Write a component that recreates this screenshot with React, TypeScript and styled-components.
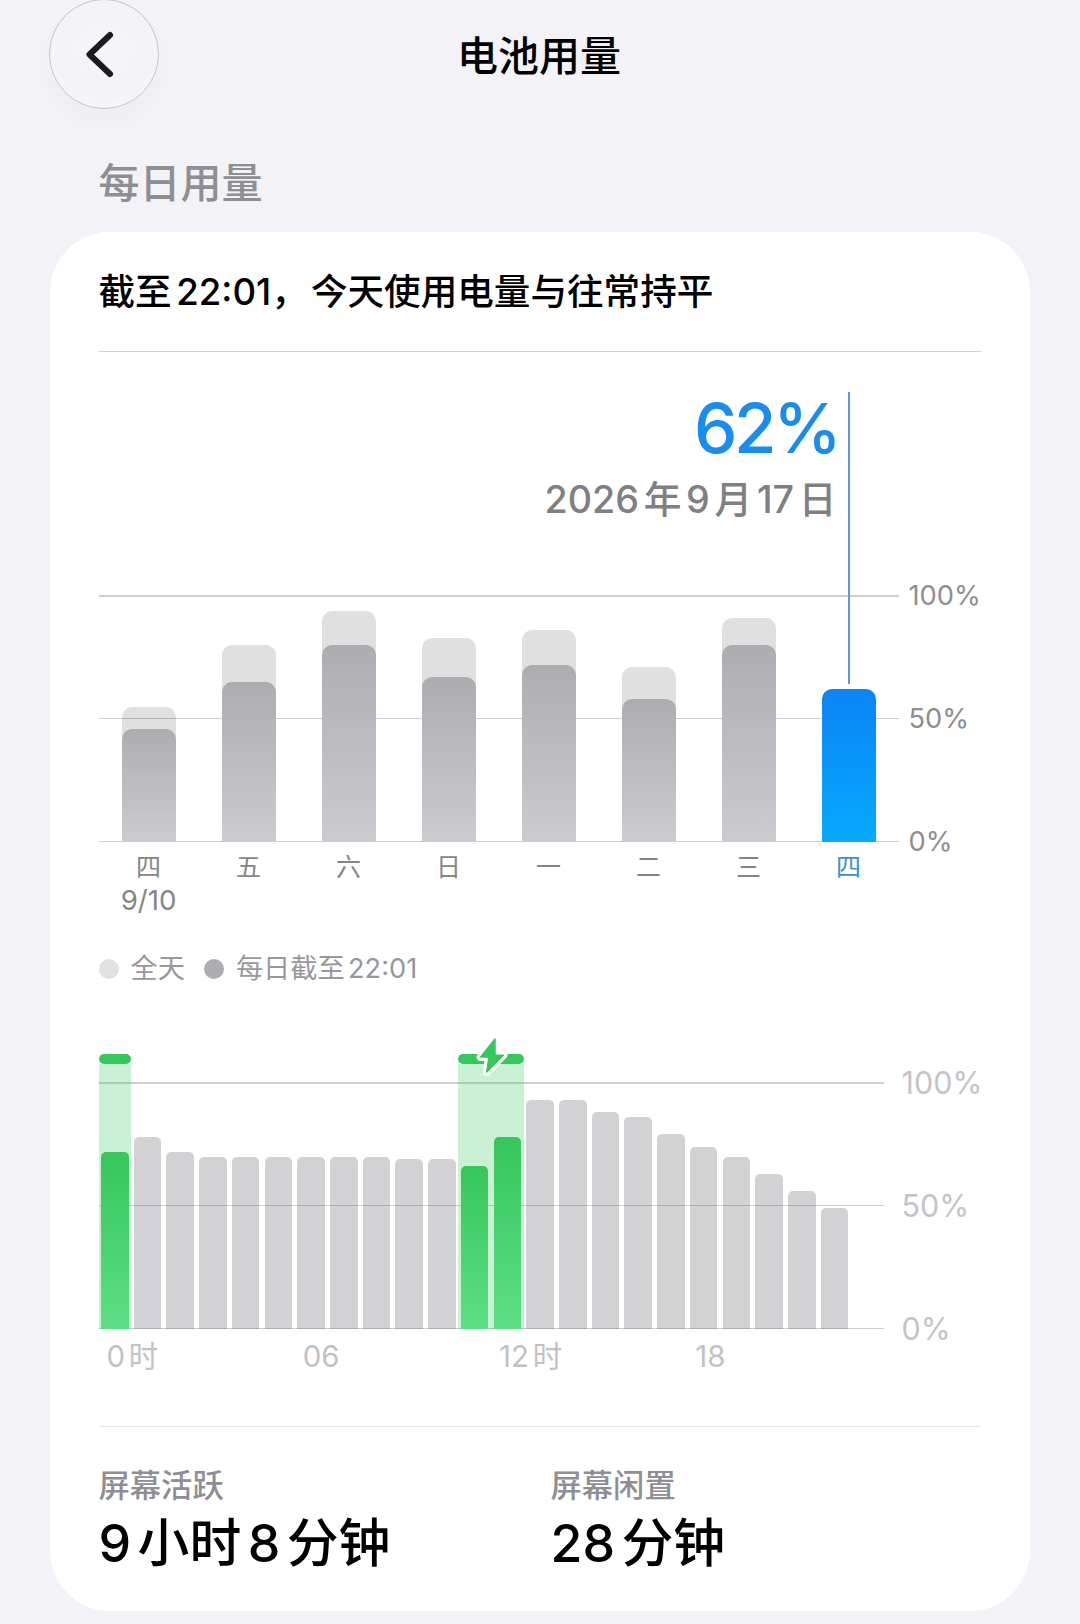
import styled, {createGlobalStyle} from "styled-components";

const DAYS = [
  {day: "四", date: "9/10", full: 135, upTo: 113},
  {day: "五", full: 196.5, upTo: 159.5},
  {day: "六", full: 230.5, upTo: 196.5},
  {day: "日", full: 203.5, upTo: 164.5},
  {day: "一", full: 211.5, upTo: 176.5},
  {day: "二", full: 174.5, upTo: 142.5},
  {day: "三", full: 223.5, upTo: 196.5},
  {day: "四", upTo: 152.5, today: true},
];

// one entry per hour, hour 23 has no data yet
const HOURS = [
  177, 191.6, 177, 172, 172, 172, 172, 172, 172, 169.6, 169.6, 162.3, 191.6, 228.3, 228.3, 216.3, 211.3, 194.3, 181.3, 172, 154.6, 137.3, 120.3,
];
const CHARGING = [0, 11, 12];

const GlobalStyle = createGlobalStyle`
  html, body {
    margin: 0;
    background: #f2f2f7;
  }
  body {
    font-family: Inter, "Noto Sans CJK SC", sans-serif;
    text-autospace: normal;
    overflow: hidden;
  }
`;

const Page = styled.div`
  width: 1080px;
  height: 1624px;
  overflow: hidden;
`;

const Header = styled.header`
  display: grid;
  grid-template-columns: 1fr auto 1fr;
  align-items: center;
  padding: 0 51px 0 49px;
  height: 108px;
`;

const BackButton = styled.button`
  display: flex;
  align-items: center;
  justify-content: center;
  width: 110px;
  height: 110px;
  margin-top: -1px;
  padding: 0 8px 0 0;
  border: 1px solid #c4c4c8;
  border-radius: 50%;
  background: radial-gradient(circle at 50% 45%, #f6f6f9 0%, #f3f3f7 60%, #fdfdfe 100%);
  box-shadow: 0 12px 24px rgba(0, 0, 0, 0.025);
`;

const Title = styled.h1`
  margin: 0;
  padding-top: 2px;
  color: #000;
  font-size: 41px;
  font-weight: 500;
  line-height: 48px;
`;

const SectionTitle = styled.h2`
  margin: 52px 0 26px 98.5px;
  color: #8e8e93;
  font-size: 41px;
  font-weight: 500;
  line-height: 46px;
`;

const Card = styled.section`
  width: 980px;
  height: 1379px;
  margin-left: 50px;
  padding: 40px 49px 0 48.5px;
  box-sizing: border-box;
  border-radius: 60px;
  background: #fff;
`;

const Summary = styled.div`
  padding-bottom: 39px;
  border-bottom: 1px solid #d1d1d6;
  color: #000;
  font-size: 36.6px;
  font-weight: 500;
  line-height: 40px;
`;

const Readout = styled.div`
  display: flex;
  flex-direction: column;
  align-items: flex-end;
  width: 800px;
  padding: 41px 63px 0 0;
  box-sizing: border-box;
`;

const Percent = styled.div`
  margin-right: -3px;
  color: #1a8cf0;
  font-size: 69px;
  font-weight: 500;
  letter-spacing: -3.3px;
  line-height: 70px;
`;

const ReadoutDate = styled.div`
  margin-top: 14px;
  margin-right: -1px;
  color: #808084;
  font-size: 37.7px;
  font-weight: 500;
  line-height: 44px;
`;

const Plot = styled.div<{$width: number; $top: number}>`
  position: relative;
  width: ${({$width}) => $width}px;
  height: 245.5px;
  margin-top: ${({$top}) => $top}px;
`;

const GridLayer = styled.div`
  position: absolute;
  inset: 0;
  display: flex;
  flex-direction: column;
  justify-content: space-between;
`;

const GridRow = styled.div`
  display: flex;
  align-items: center;
  height: 0;
`;

const GridLine = styled.div<{$width: number; $thin?: boolean}>`
  flex: none;
  width: ${({$width}) => $width}px;
  height: ${({$thin}) => ($thin ? 1 : 1.5)}px;
  background: #cfcfd2;
`;

const GridLabel = styled.span<{$faint?: boolean}>`
  margin-left: ${({$faint}) => ($faint ? 18 : 10)}px;
  color: ${({$faint}) => ($faint ? "#c4c4c6" : "#8e8e90")};
  font-size: ${({$faint}) => ($faint ? 30.5 : 27.3)}px;
  line-height: 32px;
  white-space: nowrap;
`;

const DayBars = styled.div`
  position: relative;
  display: grid;
  grid-template-columns: repeat(8, 100px);
  height: 100%;
`;

const DayColumn = styled.div`
  position: relative;
  display: flex;
  justify-content: center;
`;

const FullDayBar = styled.div<{$height: number}>`
  position: absolute;
  bottom: 0;
  width: 54px;
  height: ${({$height}) => $height}px;
  border-radius: 10px 10px 0 0;
  background: rgba(0, 0, 0, 0.12);
`;

const UpToBar = styled.div<{$height: number; $today?: boolean}>`
  position: absolute;
  bottom: 0;
  width: 54px;
  height: ${({$height}) => $height}px;
  border-radius: 10px 10px 0 0;
  background: ${({$today}) =>
    $today ? "linear-gradient(180deg, #0a84f5 0%, #06aaff 100%)" : "linear-gradient(180deg, #adadb1 0%, #cbcbd0 100%)"};
`;

const Marker = styled.div`
  position: absolute;
  bottom: calc(100% + 5px);
  left: 26px;
  width: 2px;
  height: 292px;
  background: #5b9bdc;
`;

const DayLabels = styled.div`
  display: grid;
  grid-template-columns: repeat(8, 100px);
  width: 800px;
  margin-top: 8.5px;
`;

const DayLabel = styled.div<{$today?: boolean}>`
  color: ${({$today}) => ($today ? "#3a8fd8" : "#858589")};
  font-size: 25px;
  line-height: 34px;
  text-align: center;
`;

const DayDate = styled.div`
  margin-top: -1px;
  font-size: 27.6px;
`;

const Legend = styled.div`
  display: flex;
  align-items: center;
  margin-top: 36px;
  color: #98989c;
  font-size: 27.2px;
  line-height: 32px;
`;

const LegendDot = styled.span<{$dark?: boolean}>`
  width: 20px;
  height: 20px;
  margin-right: 12px;
  border-radius: 50%;
  background: ${({$dark}) => ($dark ? "#adadb3" : "#e1e1e3")};
`;

const LegendText = styled.span`
  margin-right: 19px;
`;

const HourBars = styled.div`
  position: relative;
  display: grid;
  grid-template-columns: repeat(24, 1fr);
  height: 100%;
`;

const HourColumn = styled.div`
  position: relative;
  display: flex;
  align-items: flex-end;
  justify-content: center;
`;

const HourBar = styled.div<{$height: number; $charging: boolean}>`
  position: relative;
  z-index: 1;
  width: 27.6px;
  height: ${({$height}) => $height}px;
  border-radius: 5px 5px 0 0;
  background: ${({$charging}) =>
    $charging ? "linear-gradient(180deg, #36c65a 0%, #5ddf85 100%)" : "rgba(60, 60, 67, 0.23)"};
`;

const ChargeBand = styled.div<{$span: number}>`
  position: absolute;
  top: -19px;
  bottom: 0;
  left: 0;
  width: ${({$span}) => $span * 100}%;
  background: rgba(52, 199, 89, 0.26);

  &::before {
    content: "";
    position: absolute;
    top: -10px;
    left: 0;
    right: 0;
    height: 10px;
    border-radius: 5px;
    background: #34c759;
  }
`;

const BoltIcon = styled.svg`
  position: absolute;
  top: -29px;
  left: 17px;
`;

const HourLabels = styled.div`
  display: grid;
  grid-template-columns: repeat(4, 1fr);
  width: 785px;
  margin-top: 11px;
`;

const HourLabel = styled.span`
  padding-left: 8px;
  color: #c2c2c4;
  font-size: 29.5px;
  line-height: 32px;
`;

const Divider = styled.div`
  height: 1px;
  margin-top: 54px;
  background: #e5e5ea;
`;

const Stats = styled.div`
  display: grid;
  grid-template-columns: 452px 1fr;
  margin-top: 41px;
`;

const StatLabel = styled.div`
  color: #8e8e93;
  font-size: 31.3px;
  font-weight: 500;
  line-height: 36px;
`;

const StatValue = styled.div`
  margin-top: 11px;
  color: #000;
  font-size: 51.8px;
  font-weight: 500;
  line-height: 56px;
`;

const Grid = ({width, faint}: {width: number; faint?: boolean}) => (
  <GridLayer>
    <GridRow>
      <GridLine $width={width} />
      <GridLabel $faint={faint}>100%</GridLabel>
    </GridRow>
    <GridRow>
      <GridLine $width={width} $thin />
      <GridLabel $faint={faint}>50%</GridLabel>
    </GridRow>
    <GridRow>
      <GridLine $width={width} />
      <GridLabel $faint={faint}>0%</GridLabel>
    </GridRow>
  </GridLayer>
);

const Bolt = () => (
  <BoltIcon width="34" height="46" viewBox="0 0 34 46">
    <path d="M20 4 L5.7 22 L14 22 L11.7 37 L28.3 20.3 L20 20.3 Z" fill="#fff" stroke="#fff" strokeWidth="8" strokeLinejoin="round" />
    <path d="M20 4 L5.7 22 L14 22 L11.7 37 L28.3 20.3 L20 20.3 Z" fill="#34c759" stroke="#34c759" strokeWidth="1.5" strokeLinejoin="round" />
  </BoltIcon>
);

export default function App() {
  return (
    <Page>
      <GlobalStyle />
      <Header>
        <BackButton aria-label="返回">
          <svg width="32" height="51" viewBox="0 0 32 51" fill="none">
            <path d="M26 6 L5.5 25.5 L26 45" stroke="#1c1c1e" strokeWidth="6" strokeLinecap="round" strokeLinejoin="round" />
          </svg>
        </BackButton>
        <Title>电池用量</Title>
      </Header>
      <SectionTitle>每日用量</SectionTitle>
      <Card>
        <Summary>截至22:01，&#8202;今天使用电量与往常持平</Summary>
        <Readout>
          <Percent>62%</Percent>
          <ReadoutDate>2026年9月17日</ReadoutDate>
        </Readout>
        <Plot $width={800} $top={75}>
          <Grid width={800} />
          <DayBars>
            {DAYS.map((d, i) => (
              <DayColumn key={i}>
                {d.full && <FullDayBar $height={d.full} />}
                <UpToBar $height={d.upTo} $today={d.today}>
                  {d.today && <Marker />}
                </UpToBar>
              </DayColumn>
            ))}
          </DayBars>
        </Plot>
        <DayLabels>
          {DAYS.map((d, i) => (
            <DayLabel key={i} $today={d.today}>
              {d.day}
              {d.date && <DayDate>{d.date}</DayDate>}
            </DayLabel>
          ))}
        </DayLabels>
        <Legend>
          <LegendDot />
          <LegendText>全天</LegendText>
          <LegendDot $dark />
          <LegendText>每日截至22:01</LegendText>
        </Legend>
        <Plot $width={785} $top={98}>
          <Grid width={785} faint />
          <HourBars>
            {HOURS.map((h, i) => (
              <HourColumn key={i}>
                {i === 0 && <ChargeBand $span={1} />}
                {i === 11 && (
                  <ChargeBand $span={2}>
                    <Bolt />
                  </ChargeBand>
                )}
                <HourBar $height={h} $charging={CHARGING.includes(i)} />
              </HourColumn>
            ))}
          </HourBars>
        </Plot>
        <HourLabels>
          <HourLabel>0时</HourLabel>
          <HourLabel>06</HourLabel>
          <HourLabel>12时</HourLabel>
          <HourLabel>18</HourLabel>
        </HourLabels>
        <Divider />
        <Stats>
          <div>
            <StatLabel>屏幕活跃</StatLabel>
            <StatValue>9小时8分钟</StatValue>
          </div>
          <div>
            <StatLabel>屏幕闲置</StatLabel>
            <StatValue>28分钟</StatValue>
          </div>
        </Stats>
      </Card>
    </Page>
  );
}
